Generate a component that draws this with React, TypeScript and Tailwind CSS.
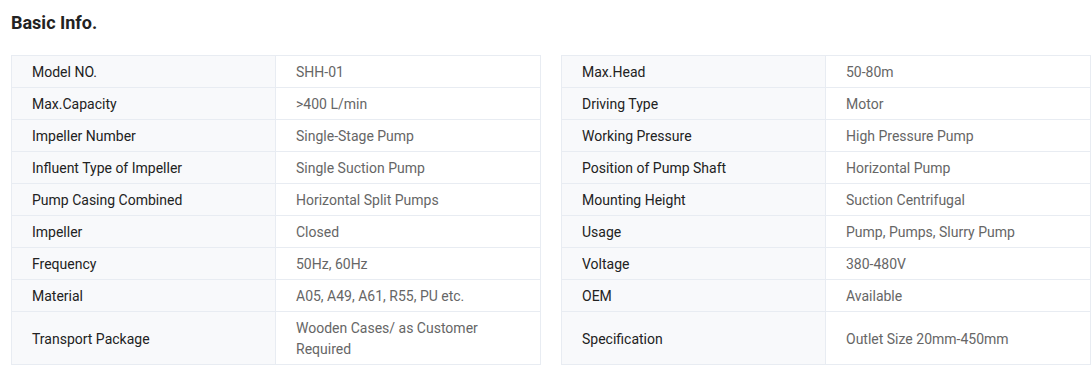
const left: [string, string][] = [
  ['Model NO.', 'SHH-01'],
  ['Max.Capacity', '>400 L/min'],
  ['Impeller Number', 'Single-Stage Pump'],
  ['Influent Type of Impeller', 'Single Suction Pump'],
  ['Pump Casing Combined', 'Horizontal Split Pumps'],
  ['Impeller', 'Closed'],
  ['Frequency', '50Hz, 60Hz'],
  ['Material', 'A05, A49, A61, R55, PU etc.'],
  ['Transport Package', 'Wooden Cases/ as Customer Required'],
];

const right: [string, string][] = [
  ['Max.Head', '50-80m'],
  ['Driving Type', 'Motor'],
  ['Working Pressure', 'High Pressure Pump'],
  ['Position of Pump Shaft', 'Horizontal Pump'],
  ['Mounting Height', 'Suction Centrifugal'],
  ['Usage', 'Pump, Pumps, Slurry Pump'],
  ['Voltage', '380-480V'],
  ['OEM', 'Available'],
  ['Specification', 'Outlet Size 20mm-450mm'],
];

function Pair({ k, v, first }: { k: string; v: string; first: boolean }) {
  return (
    <div
      className={
        'grid grid-cols-2 border-x border-b border-[#e8ecf2] ' + (first ? 'border-t' : '')
      }
    >
      <div className="flex items-center bg-[#f8f9fb] border-r border-[#e8ecf2] px-5 pt-[6px] pb-[4px] text-[#222]">
        {k}
      </div>
      <div className="flex items-center px-5 pt-[6px] pb-[4px] text-[#666]">{v}</div>
    </div>
  );
}

export default function App() {
  return (
    <div
      className="bg-white pl-[11px] pt-[11px] text-[14px] leading-[21px]"
      style={{ fontFamily: 'Roboto, "Liberation Sans", sans-serif' }}
    >
      <h2 className="text-[18px] font-bold leading-[24px] text-[#222]">Basic Info.</h2>
      <div className="mt-[20px] flex flex-col">
        {left.map(([k, v], i) => (
          <div key={k} className="grid grid-cols-[530px_530px] gap-x-5">
            <Pair k={k} v={v} first={i === 0} />
            <Pair k={right[i][0]} v={right[i][1]} first={i === 0} />
          </div>
        ))}
      </div>
    </div>
  );
}
